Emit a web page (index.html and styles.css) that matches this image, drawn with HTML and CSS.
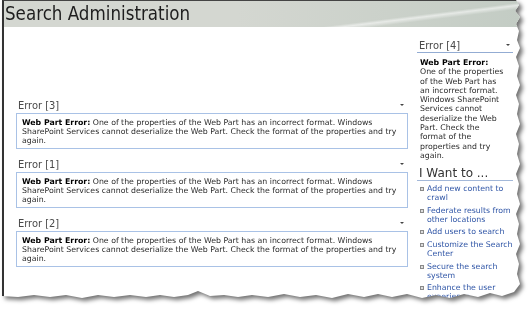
FILE: index.html
```html
<!DOCTYPE html>
<html lang="en">
<head>
	<meta charset="UTF-8">
	<title>Search Administration</title>
	<link rel="stylesheet" href="styles.css">
</head>
<body>
	<div class="sheet">
		<div class="page">
			<div class="masthead"><h1>Search Administration</h1></div>
			<div class="columns">
				<div class="main-col">
					<div class="webpart">
						<div class="part-title"><span>Error [3]</span><span class="menu-arrow"></span></div>
						<div class="part-body"><b>Web Part Error:</b> One of the properties of the Web Part has an incorrect format. Windows SharePoint Services cannot deserialize the Web Part. Check the format of the properties and try again.</div>
					</div>
					<div class="webpart">
						<div class="part-title"><span>Error [1]</span><span class="menu-arrow"></span></div>
						<div class="part-body"><b>Web Part Error:</b> One of the properties of the Web Part has an incorrect format. Windows SharePoint Services cannot deserialize the Web Part. Check the format of the properties and try again.</div>
					</div>
					<div class="webpart">
						<div class="part-title"><span>Error [2]</span><span class="menu-arrow"></span></div>
						<div class="part-body"><b>Web Part Error:</b> One of the properties of the Web Part has an incorrect format. Windows SharePoint Services cannot deserialize the Web Part. Check the format of the properties and try again.</div>
					</div>
				</div>
				<div class="side-col">
					<div class="webpart side">
						<div class="part-title"><span>Error [4]</span><span class="menu-arrow"></span></div>
						<div class="part-body"><b>Web Part Error:</b> One of the properties of the Web Part has an incorrect format. Windows SharePoint Services cannot deserialize the Web Part. Check the format of the properties and try again.</div>
					</div>
					<div class="iwant">
						<div class="iwant-title">I Want to ...</div>
						<ul class="task-list">
							<li><a href="#">Add new content to crawl</a></li>
							<li><a href="#">Federate results from other locations</a></li>
							<li><a href="#">Add users to search</a></li>
							<li><a href="#">Customize the Search Center</a></li>
							<li><a href="#">Secure the search system</a></li>
							<li><a href="#">Enhance the user experience</a></li>
						</ul>
					</div>
				</div>
			</div>
		</div>
	</div>
</body>
</html>
```

FILE: styles.css
```css
body {
	margin: 0;
	background-color: #ffffff;
	font-family: "DejaVu Sans", Verdana, sans-serif;
	color: #222222;
}
.sheet {
	width: 532px;
	height: 312px;
	filter: drop-shadow(3px 3px 2px rgba(0, 0, 0, 0.55));
}
.page {
	margin-left: 2px;
	width: 520px;
	height: 302px;
	overflow: hidden;
	background-color: #ffffff;
	border-left: 2px solid #333333;
	border-top: 1px solid #444444;
	box-sizing: border-box;
	clip-path: polygon(0 0, 514px 0, 517px 5px, 513px 11px, 518px 17px, 514px 24px, 517px 31px, 515px 40px, 518px 48px, 514px 57px, 517px 66px, 515px 76px, 518px 85px, 514px 95px, 517px 104px, 515px 114px, 518px 124px, 514px 134px, 517px 144px, 515px 154px, 518px 164px, 514px 174px, 517px 184px, 515px 194px, 518px 204px, 514px 214px, 517px 224px, 515px 234px, 518px 244px, 514px 254px, 517px 264px, 515px 274px, 518px 284px, 512px 292px, 500px 296px, 488px 293px, 476px 297px, 462px 294px, 448px 298px, 434px 295px, 420px 298px, 405px 294px, 390px 297px, 376px 294px, 362px 297px, 346px 294px, 330px 298px, 314px 295px, 298px 297px, 282px 294px, 266px 297px, 250px 295px, 236px 297px, 222px 295px, 208px 296px, 196px 291px, 186px 295px, 172px 297px, 158px 295px, 144px 297px, 128px 295px, 112px 297px, 96px 295px, 80px 298px, 64px 295px, 48px 297px, 32px 295px, 16px 297px, 0 296px);
}
.masthead {
	height: 26px;
	background-color: #d3d6d0;
	background-image:
		linear-gradient(173deg, transparent 62%, rgba(255, 255, 255, 0.55) 66%, transparent 72%),
		linear-gradient(to right, #d4d7d1 0, #d4d7d1 45%, #c3ccc4 100%);
	background-size: 320px 26px, 100% 100%;
	background-position: right top, left top;
	background-repeat: no-repeat;
}
.masthead h1 {
	margin: 0;
	padding-left: 1px;
	font-family: "DejaVu Sans Condensed", Tahoma, sans-serif;
	font-weight: normal;
	font-size: 18.6px;
	line-height: 25px;
	color: #1e1e1e;
}
.columns {
	display: flex;
	gap: 9px;
}
.main-col {
	width: 392px;
	margin-left: 12px;
	padding-top: 71px;
}
.side-col {
	width: 96px;
	padding-top: 11px;
}
.webpart {
	margin-bottom: 8px;
}
.part-title {
	display: flex;
	justify-content: space-between;
	align-items: center;
	height: 14px;
	padding: 0 4px 0 2px;
	margin-bottom: 1px;
	font-family: "DejaVu Sans Condensed", Tahoma, sans-serif;
	font-size: 11px;
	color: #4a4a4a;
}
.menu-arrow {
	width: 0;
	height: 0;
	border-left: 2px solid transparent;
	border-right: 2px solid transparent;
	border-top: 2px solid #444444;
}
.part-body {
	border: 1px solid #a9c2e6;
	padding: 4px 0 3px 5px;
	font-size: 7.8px;
	line-height: 9px;
	color: #2a2a2a;
}
.part-body b {
	color: #000000;
}
.webpart.side {
	margin-bottom: 0;
}
.webpart.side .part-title {
	margin-bottom: 0;
	border-bottom: 1px solid #93acd3;
	padding-right: 3px;
}
.webpart.side .part-body {
	border: none;
	padding: 5px 7px 0 3px;
	line-height: 9.3px;
}
.iwant {
	margin-top: 6px;
}
.iwant-title {
	height: 14px;
	padding-left: 2px;
	border-bottom: 1px solid #a3b8d9;
	font-size: 12px;
	line-height: 14px;
	color: #333333;
}
.task-list {
	list-style: none;
	margin: 0;
	padding: 3px 0 0 3px;
}
.task-list li {
	display: flex;
	gap: 3px;
	margin-bottom: 3.6px;
	font-size: 7.8px;
	line-height: 9px;
}
.task-list li::before {
	content: "";
	flex: none;
	width: 2px;
	height: 2px;
	margin-top: 3px;
	border: 1px solid #8a8a8a;
	background-color: #dcdcdc;
}
.task-list a {
	color: #2f55a6;
	text-decoration: none;
}
```
